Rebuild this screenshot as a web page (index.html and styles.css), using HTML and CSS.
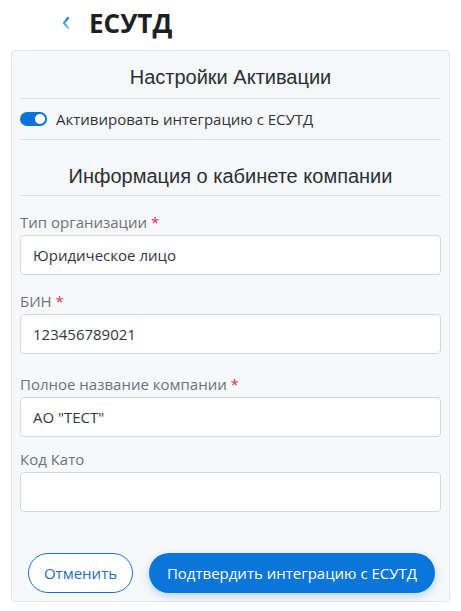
FILE: index.html
```html
<!DOCTYPE html>
<html lang="ru">
<head>
<meta charset="utf-8">
<title>ЕСУТД</title>
<link rel="stylesheet" href="styles.css">
</head>
<body>
<header class="page-header">
  <a class="back" href="#" aria-label="Назад">
    <svg width="8" height="14" viewBox="0 0 8 14"><defs><linearGradient id="g" x1="0" y1="0" x2="0" y2="1"><stop offset="0" stop-color="#1a73d9"/><stop offset="1" stop-color="#9ac3ee"/></linearGradient></defs><polyline points="6,2 2,7 6,12" fill="none" stroke="url(#g)" stroke-width="2.2" stroke-linecap="round" stroke-linejoin="round"/></svg>
  </a>
  <h1 class="page-title">ЕСУТД</h1>
</header>
<main class="card">
  <div class="section-title first">Настройки Активации</div>
  <div class="toggle-row">
    <span class="switch"><span class="knob"></span></span>
    <span class="toggle-label">Активировать интеграцию с ЕСУТД</span>
  </div>
  <div class="section-title second">Информация о кабинете компании</div>
  <div class="fields">
    <div class="field f1">
      <label class="label">Тип организации <span class="req">*</span></label>
      <div class="input">Юридическое лицо</div>
    </div>
    <div class="field f2">
      <label class="label">БИН <span class="req">*</span></label>
      <div class="input">123456789021</div>
    </div>
    <div class="field f3">
      <label class="label">Полное название компании <span class="req">*</span></label>
      <div class="input">АО "ТЕСТ"</div>
    </div>
    <div class="field f4">
      <label class="label">Код Като</label>
      <div class="input"></div>
    </div>
  </div>
  <div class="actions">
    <button class="btn btn-outline">Отменить</button>
    <button class="btn btn-primary">Подтвердить интеграцию с ЕСУТД</button>
  </div>
</main>
</body>
</html>
```
FILE: styles.css
```css
* { box-sizing: border-box; }
html, body { margin: 0; padding: 0; background: #ffffff; }
body {
  font-family: "Open Sans", "Noto Sans", sans-serif;
  color: #333a40;
  width: 461px;
}
.page-header {
  display: flex;
  align-items: center;
  height: 46px;
  padding-left: 62px;
  margin-bottom: 4px;
}
.back { display: flex; align-items: center; width: 8px; height: 14px; margin-right: 19px; }
.back svg { display: block; }
.page-title {
  margin: 0;
  font-size: 26px;
  font-weight: 700;
  line-height: 32px;
  color: #1d2126;
}
.card {
  margin: 0 11px;
  border: 1px solid #e2e5e9;
  border-radius: 4px;
  background: #f7f8fa;
  padding: 0 8px 8px;
}
.section-title {
  font-family: "Liberation Sans", Arial, sans-serif;
  font-size: 20px;
  line-height: 24px;
  color: #2b2f33;
  text-align: center;
  border-bottom: 1px solid #dfe2e6;
}
.section-title.first { padding: 14px 0 9px; }
.section-title.second { padding: 24px 0 7px; }
.toggle-row {
  display: flex;
  align-items: center;
  height: 41px;
  border-bottom: 1px solid #dfe2e6;
  padding-bottom: 1px;
}
.switch {
  position: relative;
  width: 27px;
  height: 14px;
  border-radius: 7px;
  background: #0b74d9;
  margin-right: 9px;
}
.knob {
  position: absolute;
  right: 2px;
  top: 2px;
  width: 10px;
  height: 10px;
  border-radius: 50%;
  background: #ffffff;
}
.toggle-label { font-size: 15px; color: #2f3438; }
.fields { padding-top: 16px; }
.field { display: flex; flex-direction: column; }
.f2 { margin-top: 16px; }
.f3 { margin-top: 20px; }
.f4 { margin-top: 12px; }
.label {
  font-size: 15px;
  line-height: 20px;
  color: #6c737a;
  margin-bottom: 3px;
}
.req { color: #dc3545; }
.input {
  height: 40px;
  background: #ffffff;
  border: 1px solid #d5d9de;
  border-radius: 4px;
  padding: 0 12px;
  font-size: 15px;
  line-height: 38px;
  color: #33383d;
}
.actions {
  display: flex;
  gap: 16px;
  padding-left: 8px;
  margin-top: 41px;
}
.btn {
  height: 40px;
  border-radius: 20px;
  font-family: "Open Sans", "Noto Sans", sans-serif;
  font-size: 15px;
  cursor: pointer;
}
.btn-outline {
  width: 105px;
  background: #ffffff;
  border: 1px solid #1a73c8;
  color: #1a6fc0;
}
.btn-primary {
  width: 286px;
  border: none;
  background: #0b76da;
  color: #ffffff;
  box-shadow: 0 3px 8px rgba(11, 118, 218, 0.28);
}
```
